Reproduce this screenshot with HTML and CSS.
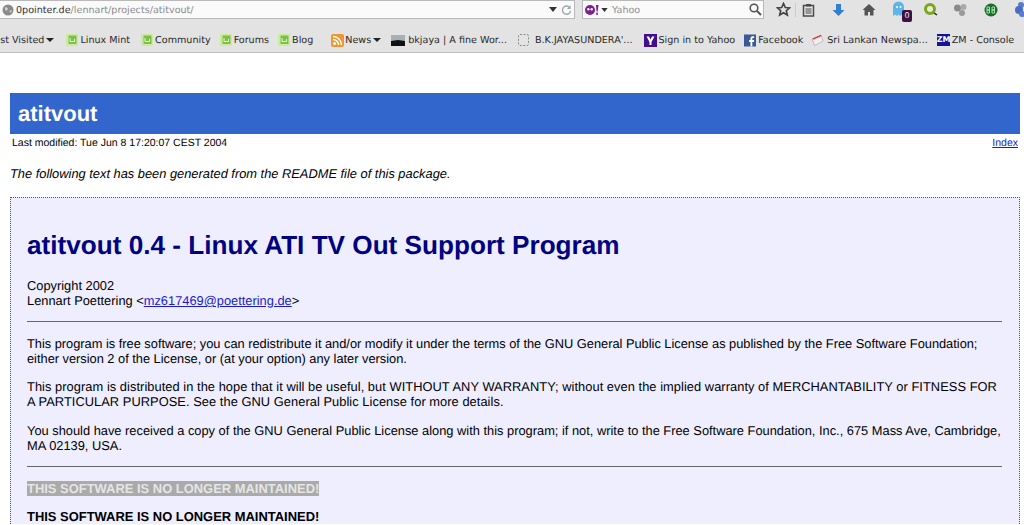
FILE: index.html
```html
<!DOCTYPE html>
<html lang="en">
<head>
<meta charset="utf-8">
<title>atitvout</title>
<link rel="stylesheet" href="styles.css">
</head>
<body>
<header class="chrome">
  <div class="navbar">
    <div class="urlbar">
      <svg class="ico-globe" width="12" height="12" viewBox="0 0 12 12"><circle cx="6" cy="6" r="5.5" fill="#8a8a8a"/><path d="M3 3l3 1-1 3-2-1zM7 7l3-1-1 3z" fill="#cfcfcf"/></svg>
      <span class="host">0pointer.de</span><span class="path">/lennart/projects/atitvout/</span>
      <span class="spacer"></span>
      <svg class="caret" width="8" height="5" viewBox="0 0 8 5"><path d="M0 0h8L4 5z" fill="#333"/></svg>
      <svg class="reload" width="11" height="12" viewBox="0 0 12 12"><path d="M9.500 3.200A4.500 4.500 0 1 0 10.500 7" fill="none" stroke="#9aa7b0" stroke-width="1.500"/><path d="M10.500 0.800v4h-4z" fill="#9aa7b0"/></svg>
    </div>
    <div class="searchbar">
      <svg class="yahoo" width="14" height="10" viewBox="0 0 14 10"><ellipse cx="5" cy="5" rx="5" ry="5" fill="#7b1f8f"/><circle cx="3.300" cy="4.200" r="1.200" fill="#fff"/><circle cx="6.700" cy="4.200" r="1.200" fill="#fff"/><path d="M11 0h2.500l-.8 6.500H11.500zM11.300 7.500h1.500V10h-1.500z" fill="#7b1f8f"/></svg>
      <svg class="caret" width="7" height="4" viewBox="0 0 8 5"><path d="M0 0h8L4 5z" fill="#333"/></svg>
      <span class="search-text">Yahoo</span>
      <span class="spacer"></span>
      <svg width="13" height="13" viewBox="0 0 13 13"><circle cx="5" cy="5" r="3.800" fill="none" stroke="#555" stroke-width="1.600"/><path d="M8 8l4 4" stroke="#555" stroke-width="2"/></svg>
    </div>
    <div class="tools">
      <svg class="tool-star" width="15" height="15" viewBox="0 0 15 15"><path d="M7.500 1.500l1.800 4 4.200.4-3.200 2.800 1 4.300-3.800-2.300-3.800 2.300 1-4.300L1.500 5.900l4.200-.4z" fill="none" stroke="#444" stroke-width="1.700"/></svg>
      <span class="tool-sep"></span>
      <svg class="tool-clip" width="13" height="14" viewBox="0 0 13 14"><rect x="1.500" y="2.500" width="10" height="10.500" fill="none" stroke="#4a4a4a" stroke-width="1.500"/><rect x="4" y="1" width="5" height="2.500" fill="#4a4a4a"/><path d="M3.500 6h6M3.500 8h6M3.500 10h6" stroke="#4a4a4a"/></svg>
      <svg class="tool-down" width="13" height="14" viewBox="0 0 13 14"><path d="M4 1h5v6h3.500L6.500 13 .5 7H4z" fill="#2f7fd6"/></svg>
      <svg class="tool-home" width="14" height="13" viewBox="0 0 14 13"><path d="M7 1L.5 7H2.500v5.500h3.500V9h2v3.500h3.500V7h2z" fill="#555"/></svg>
      <span class="ghost">
        <svg width="13" height="17" viewBox="0 0 13 17"><path d="M1 6a5.500 5.500 0 0 1 11 0v9l-2-1.500-2 1.500-1.500-1.500L5 15l-2-1.500L1 15z" fill="#5fb4ea"/><circle cx="5" cy="6" r="1" fill="#fff"/><circle cx="8.500" cy="6" r="1" fill="#fff"/></svg>
        <span class="badge">0</span>
      </span>
      <svg class="tool-q" width="15" height="15" viewBox="0 0 15 15"><circle cx="7" cy="7" r="4.500" fill="#e9e8d0" stroke="#7aa51c" stroke-width="3"/><path d="M11 11l3 2" stroke="#222" stroke-width="1.500"/></svg>
      <svg class="tool-grey" width="15" height="14" viewBox="0 0 15 14"><circle cx="4.500" cy="5" r="3.500" fill="#8a8a8a"/><circle cx="10.500" cy="4" r="3" fill="#aaa"/><circle cx="9" cy="10" r="3" fill="#999"/></svg>
      <svg class="tool-bb" width="14" height="14" viewBox="0 0 14 14"><circle cx="7" cy="7" r="6.500" fill="#176b2c"/><path d="M3 4v6M3 4h2.500v3H3M3 7h2.500v3H3M8 4v6M8 4h2.500v3H8M8 7h2.500v3H8" stroke="#a6e3a0" fill="none"/></svg>
      <svg class="tool-blue" width="10" height="17" viewBox="0 0 10 17"><circle cx="7" cy="4" r="3" fill="#5b7cc9"/><circle cx="5" cy="9" r="4" fill="#4a6cc0"/><circle cx="8" cy="13" r="3" fill="#5b7cc9"/></svg>
    </div>
  </div>
  <nav class="bookmarks">
    <span class="bm bm-first">Most Visited<svg class="caret-s" width="8" height="4" viewBox="0 0 8 4"><path d="M0 0h8L4 4z" fill="#222"/></svg></span>
    <span class="bm bm-mint"><svg class="fav" width="12" height="12" viewBox="0 0 12 12"><rect width="12" height="12" fill="#cdeaa2"/><rect x="2.500" y="1.500" width="8" height="8.500" fill="#7cc04a"/><path d="M4 4v3.500h4.500V5" stroke="#e8f5d8" fill="none"/></svg>Linux Mint</span>
    <span class="bm bm-tight"><svg class="fav" width="12" height="12" viewBox="0 0 12 12"><rect width="12" height="12" fill="#cdeaa2"/><rect x="2.500" y="1.500" width="8" height="8.500" fill="#7cc04a"/><path d="M4 4v3.500h4.500V5" stroke="#e8f5d8" fill="none"/></svg>Community</span>
    <span class="bm bm-tight"><svg class="fav" width="12" height="12" viewBox="0 0 12 12"><rect width="12" height="12" fill="#cdeaa2"/><rect x="2.500" y="1.500" width="8" height="8.500" fill="#7cc04a"/><path d="M4 4v3.500h4.500V5" stroke="#e8f5d8" fill="none"/></svg>Forums</span>
    <span class="bm bm-blog"><svg class="fav" width="12" height="12" viewBox="0 0 12 12"><rect width="12" height="12" fill="#cdeaa2"/><rect x="2.500" y="1.500" width="8" height="8.500" fill="#7cc04a"/><path d="M4 4v3.500h4.500V5" stroke="#e8f5d8" fill="none"/></svg>Blog</span>
    <span class="bm bm-news"><svg class="fav-tight" width="13" height="13" viewBox="0 0 13 13"><rect width="13" height="13" rx="2" fill="#f0962e"/><circle cx="3.500" cy="9.500" r="1.500" fill="#fff"/><path d="M2 5.500a5.500 5.500 0 0 1 5.500 5.500M2 2.500a8.500 8.500 0 0 1 8.500 8.500" stroke="#fff" stroke-width="1.500" fill="none"/></svg>News<svg class="caret-s" width="8" height="4" viewBox="0 0 8 4"><path d="M0 0h8L4 4z" fill="#222"/></svg></span>
    <span class="bm bm-wp"><svg class="fav-wp" width="14" height="11" viewBox="0 0 14 11"><rect width="14" height="11" fill="#a6b0b8"/><path d="M0 6l7-1 7 1v5H0z" fill="#111"/></svg>bkjaya | A fine Wor...</span>
    <span class="bm bm-bk"><svg class="fav-wide" width="11" height="12" viewBox="0 0 11 12"><rect x=".5" y=".5" width="10" height="11" rx="1.500" fill="none" stroke="#888" stroke-dasharray="2 1.500"/></svg>B.K.JAYASUNDERA'...</span>
    <span class="bm bm-y"><svg class="fav-tight" width="13" height="13" viewBox="0 0 13 13"><rect width="13" height="13" fill="#400e8f"/><path d="M2.500 2.500h2.500l1.500 3 1.500-3h2.500l-3 5.500v3H5.500V8z" fill="#fff"/></svg>Sign in to Yahoo</span>
    <span class="bm bm-fb"><svg class="fav-fb" width="12" height="13" viewBox="0 0 13 13"><rect width="13" height="13" fill="#3b5998"/><path d="M9 13V8h1.700l.3-2H9V4.800c0-.6.200-1 1-1h1V2h-1.500C7.700 2 7 3.100 7 4.600V6H5.500v2H7v5z" fill="#fff"/></svg>Facebook</span>
    <span class="bm bm-sl"><svg class="fav-sl" width="13" height="13" viewBox="0 0 14 13"><path d="M1 5l10-4 2 6-9 5z" fill="#eee" stroke="#bbb"/><path d="M2 5l9-4" stroke="#d33" stroke-width="1.500"/></svg>Sri Lankan Newspa...</span>
    <span class="bm bm-zm"><span class="zm-ico">ZM</span>ZM - Console</span>
  </nav>
</header>
<main class="page">
  <div class="title-bar"><h1>atitvout</h1></div>
  <div class="modified">
    <span>Last modified: Tue Jun 8 17:20:07 CEST 2004</span>
    <a href="#">Index</a>
  </div>
  <p class="generated">The following text has been generated from the README file of this package.</p>
  <div class="readme">
    <h2>atitvout 0.4 - Linux ATI TV Out Support Program</h2>
    <p>Copyright 2002<br>Lennart Poettering &lt;<a href="#">mz617469@poettering.de</a>&gt;</p>
    <hr>
    <p class="para-one">This program is free software; you can redistribute it and/or modify it under the terms of the GNU General Public License as published by the Free Software Foundation; either version 2 of the License, or (at your option) any later version.</p>
    <p class="para-two">This program is distributed in the hope that it will be useful, but WITHOUT ANY WARRANTY; without even the implied warranty of MERCHANTABILITY or FITNESS FOR<br>A PARTICULAR PURPOSE. See the GNU General Public License for more details.</p>
    <p>You should have received a copy of the GNU General Public License along with this program; if not, write to the Free Software Foundation, Inc., 675 Mass Ave, Cambridge, MA 02139, USA.</p>
    <hr>
    <p class="warn"><span class="warn-hl">THIS SOFTWARE IS NO LONGER MAINTAINED!</span></p>
    <p class="warn warn-last">THIS SOFTWARE IS NO LONGER MAINTAINED!</p>
  </div>
</main>
</body>
</html>
```
FILE: styles.css
```css
html, body {
  margin: 0;
  padding: 0;
  height: 525px;
  overflow: hidden;
  background: #fff;
  font-family: "Liberation Sans", Arial, sans-serif;
  text-rendering: geometricPrecision;
}
.chrome {
  background: #e3e3e3;
  border-bottom: 1px solid #bdbdbd;
  color: #2a2a2a;
  font-family: "DejaVu Sans", sans-serif;
}
.navbar {
  display: flex;
  align-items: center;
  height: 22px;
  padding-bottom: 3px;
  box-sizing: border-box;
  overflow: hidden;
}
.urlbar, .searchbar {
  display: flex;
  flex: none;
  align-items: center;
  height: 19px;
  background: #fafafa;
  border: 1px solid #b9b9b9;
  box-sizing: border-box;
  font-size: 9.600px;
}
.urlbar {
  width: 575px;
  padding: 0 2px 0 2px;
  border-left: 0;
}
.ico-globe { margin-right: 2px; }
.host { color: #333; padding-top: 2px; }
.path { color: #8c8c8c; padding-top: 2px; }
.spacer { flex: 1; }
.reload { margin-left: 4px; }
.searchbar {
  width: 182px;
  margin-left: 7px;
  padding: 0 1px 0 2px;
}
.yahoo { margin-right: 2px; }
.search-text { color: #8f8f8f; margin-left: 4px; padding-top: 2px; }
.tools {
  display: flex;
  flex: none;
  align-items: center;
  height: 19px;
}
.tool-star { flex: none; margin-left: 12px; }
.tool-sep { flex: none; width: 1px; height: 14px; background: #ccc; margin-left: 4px; }
.tool-clip { flex: none; margin-left: 6px; }
.tool-down { flex: none; margin-left: 17px; }
.tool-home { flex: none; margin-left: 17px; }
.ghost { position: relative; display: block; flex: none; width: 13px; height: 17px; margin-left: 16px; }
.ghost svg { display: block; }
.badge {
  position: absolute;
  left: 10px;
  top: 9px;
  width: 10px;
  height: 12px;
  background: #3c1145;
  border-radius: 2px;
  color: #eee;
  font-size: 8px;
  line-height: 12px;
  text-align: center;
}
.tool-q { flex: none; margin-left: 18px; }
.tool-grey { flex: none; margin-left: 15px; }
.tool-bb { flex: none; margin-left: 16px; }
.tool-blue { flex: none; margin-left: 16px; }
.bookmarks {
  display: flex;
  align-items: center;
  height: 30px;
  padding-top: 6px;
  box-sizing: border-box;
  white-space: nowrap;
  font-size: 9.600px;
  overflow: hidden;
}
.bm { display: flex; align-items: center; flex: none; }
.bm-first { margin-left: -14px; margin-right: 12px; }
.caret-s { margin-left: 2px; }
.fav { margin-right: 2px; }
.fav-wp { margin-right: 3px; }
.fav-wide { margin-right: 6px; }
.fav-tight { margin-right: 1px; }
.fav-fb { margin-right: 2px; }
.fav-sl { margin-right: 3px; }
.bm-mint { margin-right: 11px; }
.bm-tight { margin-right: 9px; }
.bm-blog { margin-right: 18px; }
.bm-news { margin-right: 10px; }
.bm-wp { margin-right: 11px; }
.bm-bk { margin-right: 12px; }
.bm-y { margin-right: 9px; }
.bm-fb { margin-right: 8px; }
.bm-sl { margin-right: 9px; }
.zm-ico {
  width: 13px;
  height: 12px;
  margin-right: 2px;
  background: #14149a;
  color: #fff;
  font-size: 8px;
  font-weight: bold;
  line-height: 12px;
  text-align: center;
  overflow: hidden;
}
.page {
  padding: 40px 4px 0 10px;
}
.title-bar {
  background: #3366cc;
  height: 41px;
  display: flex;
  align-items: center;
  padding-left: 8px;
}
h1 {
  margin: 0;
  color: #fff;
  font-size: 22px;
  font-weight: bold;
}
.modified {
  display: flex;
  justify-content: space-between;
  padding: 3px 2px 0;
  font-size: 10.500px;
  line-height: 13px;
  color: #000;
}
a { color: #1a1acc; }
.generated {
  margin: 16px 0 16px;
  font-size: 12.850px;
  font-style: italic;
  line-height: 15px;
  color: #000;
}
.readme {
  background: #eeeeff;
  border: 1px dotted #555;
  border-bottom: 0;
  padding: 16px 17px 0 16px;
  font-size: 12.850px;
  line-height: 15px;
  color: #000;
}
h2 {
  margin: 17px 0 18px;
  color: #000080;
  font-size: 26.150px;
  line-height: 29px;
  font-weight: bold;
}
.readme p { margin: 13px 0; }
.readme .para-one { letter-spacing: -0.020px; }
.readme .para-two { margin-bottom: 14px; letter-spacing: 0.050px; }
.readme hr { margin: 13px 0 14px; border: 0; border-top: 1px solid #666; }
.readme .warn { font-weight: bold; font-size: 12.950px; }
.readme .warn-last { margin-bottom: 0; }
.warn-hl { background: #aaaaaa; color: #e5e5e5; }
```
